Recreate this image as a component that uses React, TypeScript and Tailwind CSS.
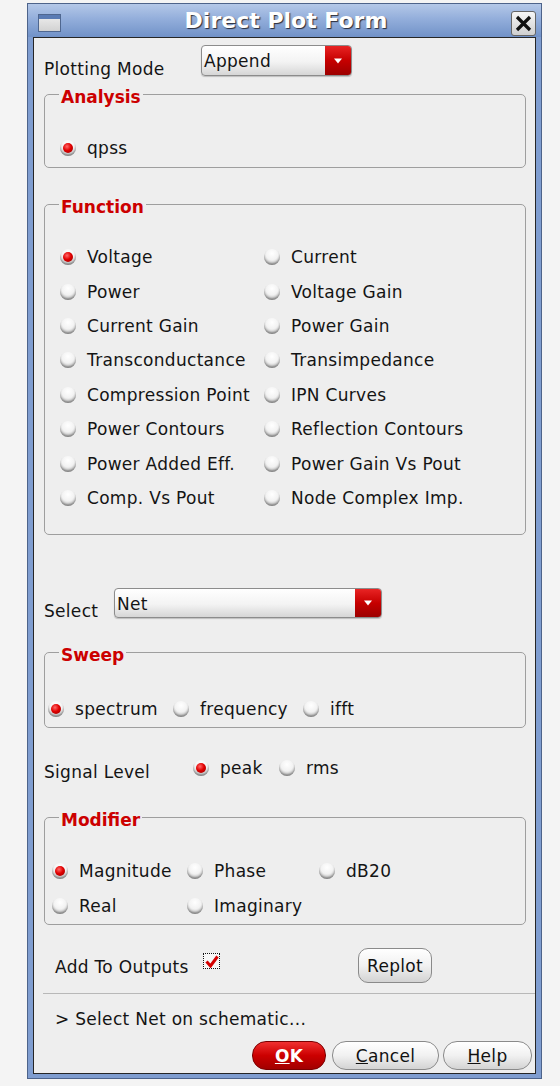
import React from 'react';
import clsx from 'clsx';

const Radio = ({ checked }: { checked?: boolean }) => (
  <span className="flex h-[16px] w-[16px] shrink-0 items-center justify-center rounded-full bg-[radial-gradient(circle_at_50%_28%,#ffffff_0%,#f2f2f2_45%,#d0d0d0_70%,#8c8c8c_100%)] shadow-[inset_0_-2px_2px_rgba(0,0,0,0.3)]">
    {checked && (
      <span className="h-[10px] w-[10px] rounded-full bg-[radial-gradient(circle_at_40%_35%,#ff6a6a_0%,#e20000_45%,#8a0000_100%)]" />
    )}
  </span>
);

const Option = ({ label, checked, className }: { label: string; checked?: boolean; className?: string }) => (
  <div className={clsx('flex items-center gap-[11px] leading-[20px]', className)}>
    <Radio checked={checked} />
    <span>{label}</span>
  </div>
);

const Combo = ({ value, className }: { value: string; className?: string }) => (
  <div
    className={clsx(
      'flex overflow-hidden rounded-[4px] border border-[#8c8c8c] bg-[linear-gradient(#ffffff,#f3f3f3_55%,#d6d6d6)] shadow-[0_1px_1px_rgba(0,0,0,0.2)]',
      className
    )}
  >
    <span className="flex-1 pl-[2px] pt-[5px] leading-[20px]">{value}</span>
    <span className="flex w-[26px] items-center justify-center bg-[linear-gradient(#e82424,#c60000_50%,#9c0000)]">
      <svg width="10" height="6" viewBox="0 0 10 6">
        <path d="M1 0.5h8L5 5.5z" fill="#fff" />
      </svg>
    </span>
  </div>
);

const Group = ({ title, className, children }: { title: string; className?: string; children: React.ReactNode }) => (
  <fieldset className={clsx('rounded-[5px] border border-[#9e9e9e]', className)}>
    <legend className="ml-[14px] px-[2px] pt-[6px] text-[17px] font-bold leading-[20px] tracking-normal text-[#cc0000]">
      {title}
    </legend>
    {children}
  </fieldset>
);

const PillButton = ({ children, className }: { children: React.ReactNode; className?: string }) => (
  <button
    className={clsx(
      'flex items-center justify-center border border-[#8a8a8a] bg-[linear-gradient(#ffffff,#f1f1f1_50%,#d3d3d3)] leading-[20px] text-[#111]',
      className
    )}
  >
    {children}
  </button>
);

const functions: [string, string][] = [
  ['Voltage', 'Current'],
  ['Power', 'Voltage Gain'],
  ['Current Gain', 'Power Gain'],
  ['Transconductance', 'Transimpedance'],
  ['Compression Point', 'IPN Curves'],
  ['Power Contours', 'Reflection Contours'],
  ['Power Added Eff.', 'Power Gain Vs Pout'],
  ['Comp. Vs Pout', 'Node Complex Imp.'],
];

export default function App() {
  return (
    <div className="h-[1086px] w-[560px] bg-[#f4f4f4] pl-[27px] pt-[3px] font-['DejaVu_Sans',sans-serif] text-[17px] tracking-[0.3px] text-[#141414]">
      <div className="w-[515px] border border-[#4d638a] bg-[#7f9dd0]">
        {/* title bar */}
        <div className="flex h-[33px] items-center bg-[linear-gradient(#b4c8e8,#93aedb_45%,#7192c8)]">
          <div className="ml-[10px] mt-[5px] h-[18px] w-[23px] border border-[#4f6790] bg-[linear-gradient(#eeeeee,#d2d2d2)]">
            <div className="h-[4px] bg-[#5a7bb4]" />
          </div>
          <div className="flex-1 text-center text-[22px] font-bold leading-[26px] tracking-normal text-white [text-shadow:1px_1px_1px_rgba(30,30,40,0.9)]">
            Direct Plot Form
          </div>
          <div className="mr-[5px] mt-[5px] flex h-[25px] w-[25px] items-center justify-center rounded-[3px] border border-[#666] bg-[linear-gradient(#f6f6f6,#d0d0d0)]">
            <svg width="19" height="19" viewBox="0 0 19 19">
              <path d="M3 3l13 13M16 3L3 16" stroke="#111" strokeWidth="3.2" />
            </svg>
          </div>
        </div>

        {/* body */}
        <div className="mx-[5px] mb-[4px] border border-[#262626] bg-[#eeeeee] pb-[3px] pl-[10px] pr-[9px]">
          <div className="mt-[7px] flex items-start">
            <span className="mt-[14px] w-[157px] leading-[20px]">Plotting Mode</span>
            <Combo value="Append" className="h-[31px] w-[151px]" />
          </div>

          <Group title="Analysis" className="mt-[2px] pb-[9px] pt-[31px]">
            <Option label="qpss" checked className="pl-[15px]" />
          </Group>

          <Group title="Function" className="mt-[23px] pb-[19px] pt-[23px]">
            <div className="grid auto-rows-[34.43px] grid-cols-[204px_1fr] items-center pl-[15px]">
              {functions.map(([a, b], i) => (
                <React.Fragment key={a}>
                  <Option label={a} checked={i === 0} />
                  <Option label={b} />
                </React.Fragment>
              ))}
            </div>
          </Group>

          <div className="mt-[53px] flex items-start">
            <span className="mt-[13px] w-[70px] leading-[20px]">Select</span>
            <Combo value="Net" className="h-[30px] w-[268px]" />
          </div>

          <Group title="Sweep" className="mt-[18px] pb-[8px] pt-[34px]">
            <div className="flex pl-[3px]">
              <Option label="spectrum" checked className="w-[125px]" />
              <Option label="frequency" className="w-[130px]" />
              <Option label="ifft" />
            </div>
          </Group>

          <div className="mt-[30px] flex items-start">
            <span className="mt-[4px] w-[149px] leading-[20px]">Signal Level</span>
            <Option label="peak" checked className="w-[86px]" />
            <Option label="rms" />
          </div>

          <Group title="Modifier" className="mt-[22px] pb-[1px] pt-[23px]">
            <div className="grid auto-rows-[35px] grid-cols-[135px_132px_1fr] pl-[7px]">
              <Option label="Magnitude" checked />
              <Option label="Phase" />
              <Option label="dB20" />
              <Option label="Real" />
              <Option label="Imaginary" />
            </div>
          </Group>

          <div className="mt-[23px] flex h-[35px] items-start pl-[11px]">
            <span className="mt-[9px] w-[148px] leading-[20px]">Add To Outputs</span>
            <span className="mt-[5px] flex h-[16px] w-[17px] items-center justify-center border border-dotted border-[#111] bg-[#f7f7f7]">
              <svg width="14" height="13" viewBox="0 0 14 13">
                <path d="M1.5 6.5l4 4.5L12.5 1.5" fill="none" stroke="#d40000" strokeWidth="3" />
              </svg>
            </span>
            <PillButton className="ml-[138px] h-[35px] w-[74px] rounded-[10px]">Replot</PillButton>
          </div>

          <div className="-ml-[1px] -mr-[9px] mt-[10px] h-px bg-[#b8b8b8]" />

          <div className="mt-[15px] pl-[11px] leading-[20px]">&gt; Select Net on schematic...</div>

          <div className="-mr-[6px] mt-[12px] flex justify-end">
            <button className="flex h-[29px] w-[74px] items-center justify-center rounded-[14px] border border-[#7a0000] bg-[linear-gradient(#f03030,#cc0000_50%,#a20000)] font-bold leading-[20px] text-white">
              <span className="underline">O</span>K
            </button>
            <PillButton className="ml-[6px] h-[29px] w-[107px] rounded-[14px]">
              <span className="underline">C</span>ancel
            </PillButton>
            <PillButton className="ml-[4px] h-[29px] w-[89px] rounded-[14px]">
              <span className="underline">H</span>elp
            </PillButton>
          </div>
        </div>
      </div>
    </div>
  );
}
